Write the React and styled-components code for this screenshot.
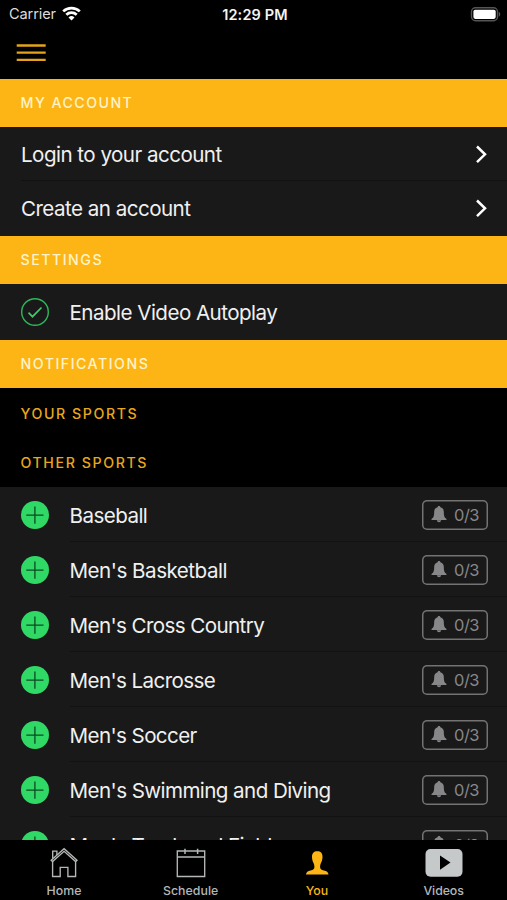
import styled, { createGlobalStyle } from 'styled-components'

const colors = {
  gold: '#fdb515',
  panel: '#191919',
  line: '#121212',
  green: '#30d965',
  grey: '#87878a',
  tab: '#b4b8b9'
}

const GlobalStyle = createGlobalStyle`
  * {
    box-sizing: border-box;
  }

  body {
    margin: 0;
    background: #000;
    font-family: Inter, 'Liberation Sans', sans-serif;
    -webkit-font-smoothing: antialiased;
  }
`

const StyledScreen = styled.div`
  width: 507px;
  height: 900px;
  display: flex;
  flex-direction: column;
  overflow: hidden;
  background: #000;
`

const StyledStatusBar = styled.div`
  flex: none;
  height: 27px;
  display: grid;
  grid-template-columns: 1fr auto 1fr;
  align-items: center;
  padding: 0 6px 0 9px;
  color: #dcdcdc;
  font-size: 14.6px;
  line-height: 27px;
`

const StyledCarrier = styled.div`
  display: flex;
  align-items: center;
  gap: 6px;
  padding-top: 1px;
  letter-spacing: -0.12px;

  svg {
    margin-top: -2px;
  }
`

const StyledTime = styled.div`
  font-weight: 600;
  font-size: 14.5px;
  letter-spacing: 0.15px;
  color: #f4f4f4;
`

const StyledBattery = styled.svg`
  justify-self: end;
`

const StyledHeader = styled.div`
  flex: none;
  height: 52px;
  padding: 16px 0 0 16px;
`

const StyledContent = styled.div`
  flex: 1;
  min-height: 0;
  overflow: hidden;
`

const StyledSection = styled.div`
  height: ${props => props.$height}px;
  display: flex;
  align-items: center;
  padding-left: 20.5px;
  background: ${props => (props.$plain ? '#000' : colors.gold)};
  color: ${props => (props.$plain ? '#e8a71c' : '#fff3c9')};
  font-size: 14.2px;
  font-weight: 500;
  letter-spacing: ${props => props.$spacing}px;
`

const StyledRow = styled.div`
  height: ${props => props.$height}px;
  display: flex;
  align-items: center;
  padding: 0 19px 0 21px;
  background: ${colors.panel};
  background-image: linear-gradient(${colors.line}, ${colors.line});
  background-repeat: no-repeat;
  background-size: 100% ${props => (props.$last ? 0 : 1)}px;
  background-position: ${props => props.$inset}px 100%;
`

const StyledLabel = styled.div`
  flex: 1;
  padding-top: 2px;
  white-space: nowrap;
  color: #f0f0f0;
  font-size: 20.6px;
  line-height: 28px;
  letter-spacing: ${props => props.$spacing}px;
`

const StyledRowIcon = styled.svg`
  flex: none;
  width: 28px;
  height: 28px;
  margin-right: 20.5px;
`

const StyledCounter = styled.div`
  width: 66px;
  height: 30px;
  display: flex;
  align-items: center;
  justify-content: center;
  gap: 7px;
  border-radius: 5px;
  box-shadow: inset 0 0 0 1.5px #737373;
  color: ${colors.grey};
  font-size: 16.4px;
  letter-spacing: -0.5px;
`

const StyledTabBar = styled.div`
  flex: none;
  height: 60px;
  display: grid;
  grid-template-columns: repeat(4, 1fr);
  background: #000;
`

const StyledTab = styled.div`
  display: flex;
  flex-direction: column;
  align-items: center;
  padding-left: ${props => props.$shift || 0}px;
  color: ${props => (props.$active ? colors.gold : colors.tab)};
  font-size: 12.3px;
  font-weight: 550;
  line-height: 16px;
  letter-spacing: ${props => props.$spacing}px;

  svg {
    height: 34px;
    margin: 6px 0 3px;
  }
`

function WifiIcon () {
  return (
    <svg width="19" height="15" viewBox="0 0 19 15" fill="none" stroke="#fff" strokeWidth="2.7">
      <path d="M1.2 5.4a12 12 0 0 1 16.6 0" />
      <path d="M4.3 8.7a7.5 7.5 0 0 1 10.4 0" />
      <path d="M9.5 14.4 6.5 11.5a4.3 4.3 0 0 1 6 0Z" fill="#fff" stroke="none" />
    </svg>
  )
}

function BatteryIcon () {
  return (
    <StyledBattery width="31" height="15" viewBox="0 0 31 15">
      <rect x="1.5" y=".8" width="26" height="13" rx="4" fill="#000" stroke="#555" strokeWidth="1.4" />
      <rect x="3.4" y="2.7" width="22.3" height="9.2" rx="1.8" fill="#fff" />
      <path d="M28.8 5c1.9.5 1.9 4.2 0 4.7z" fill="#555" />
    </StyledBattery>
  )
}

function MenuIcon () {
  return (
    <svg width="30" height="20" viewBox="0 0 30 20" stroke="#e5a31a" strokeWidth="2.3">
      <path d="M.7 2.5h29M.7 9.7h29M.7 16.9h29" />
    </svg>
  )
}

function Chevron () {
  return (
    <svg width="13" height="18" viewBox="0 0 13 18" fill="none" stroke="#fff" strokeWidth="2.5">
      <path d="m2 1.5 8 7.8-8 7.8" />
    </svg>
  )
}

function CheckIcon () {
  return (
    <StyledRowIcon viewBox="0 0 28 28" fill="none" stroke="#2fb85a">
      <circle cx="14" cy="14" r="13.3" strokeWidth="1.4" />
      <path d="m7.5 14.7 4 4 9-9.2" strokeWidth="1.7" stroke="#36cf68" />
    </StyledRowIcon>
  )
}

function PlusIcon () {
  return (
    <StyledRowIcon viewBox="0 0 28 28">
      <circle cx="14" cy="14" r="14" fill={colors.green} />
      <path d="M5.3 14.2h17.2M13.9 5.5v17.2" stroke="#0d4a20" strokeWidth="1.3" />
    </StyledRowIcon>
  )
}

function BellIcon () {
  return (
    <svg width="16" height="17" viewBox="0 0 16 17" fill={colors.grey}>
      <path d="M8 0c.8 0 1.3.5 1.4 1.2 2.3.6 3.4 2.3 3.4 4.6 0 3.8.4 5.9 2.5 7 .4.2.4 1.1-.2 1.1H.9c-.6 0-.6-.9-.2-1.1 2.1-1.1 2.5-3.2 2.5-7 0-2.3 1.1-4 3.4-4.6C6.7.5 7.2 0 8 0z" />
      <path d="M5.8 14.3h4.4c-.2 1.3-1.1 2-2.2 2s-2-.7-2.200-2z" />
    </svg>
  )
}

function HomeIcon () {
  return (
    <svg width="30" viewBox="0 0 30 34" fill="none" stroke="currentColor" strokeWidth="1.35">
      <path d="m2.2 14.2 12.9-11.5 12.9 11.5-1.4 1.3L15.1 5.3 3.6 15.5z" />
      <path d="M3.6 15v15.5h7.6v-9.2h7.7v9.2h7.7V15" />
      <path d="M3.7 12.8V5.1h4.2v3.9" />
    </svg>
  )
}

function ScheduleIcon () {
  return (
    <svg width="30" viewBox="0 0 30 34" fill="none" stroke="currentColor" strokeWidth="1.35">
      <path d="M1.3 5h27.400v25.5H1.3zM1.3 11h27.4" />
      <path d="M9 2.7v5.4M21.6 2.7v5.4" strokeWidth="1.5" />
    </svg>
  )
}

function PersonIcon () {
  return (
    <svg width="30" viewBox="0 0 30 34" fill="currentColor">
      <path d="M15.300 5.200c3.500 0 5.300 2 5.200 5.500 0 2.600-.7 4.700-1.500 6.200-.7 1.300-.9 2.400-.9 4.200 0 2 1.100 2.800 3.800 3.500 2.800.7 4.400 1.600 4.600 4H4c.2-2.400 1.800-3.300 4.600-4 2.700-.7 3.800-1.500 3.800-3.500 0-1.800-.2-2.900-.9-4.200-.8-1.500-1.500-3.600-1.500-6.200 0-3.500 1.800-5.500 5.300-5.500z" />
    </svg>
  )
}

function VideoIcon () {
  return (
    <svg width="38" viewBox="0 0 38 34">
      <rect x=".5" y="3" width="37" height="27.7" rx="5" fill="#c5c9ca" />
      <path d="m15 9.6 10.5 7L15 23.8z" fill="#000" />
    </svg>
  )
}

const sports = [
  { name: 'Baseball', spacing: -0.56 },
  { name: "Men's Basketball", spacing: -0.5 },
  { name: "Men's Cross Country", spacing: -0.6 },
  { name: "Men's Lacrosse", spacing: -0.6 },
  { name: "Men's Soccer", spacing: -0.6 },
  { name: "Men's Swimming and Diving", spacing: -0.58 },
  { name: "Men's Track and Field", spacing: -0.6 }
]

const tabs = [
  { name: 'Home', Icon: HomeIcon, spacing: 0.1, shift: 1.5 },
  { name: 'Schedule', Icon: ScheduleIcon, spacing: 0.05, shift: 1 },
  { name: 'You', Icon: PersonIcon, spacing: 0, active: true },
  { name: 'Videos', Icon: VideoIcon, spacing: -0.05 }
]

function App () {
  return (
    <StyledScreen>
      <GlobalStyle />

      <StyledStatusBar>
        <StyledCarrier>Carrier <WifiIcon /></StyledCarrier>
        <StyledTime>12:29 PM</StyledTime>
        <BatteryIcon />
      </StyledStatusBar>

      <StyledHeader>
        <MenuIcon />
      </StyledHeader>

      <StyledContent>
        <StyledSection $height={47.5} $spacing={1.45}>MY ACCOUNT</StyledSection>
        <StyledRow $height={54.5} $inset={21}>
          <StyledLabel $spacing={-0.54}>Login to your account</StyledLabel>
          <Chevron />
        </StyledRow>
        <StyledRow $height={54.5} $inset={21} $last>
          <StyledLabel $spacing={-0.54}>Create an account</StyledLabel>
          <Chevron />
        </StyledRow>

        <StyledSection $height={48.5} $spacing={1.5}>SETTINGS</StyledSection>
        <StyledRow $height={55.5} $inset={70} $last>
          <CheckIcon />
          <StyledLabel $spacing={-0.54}>Enable Video Autoplay</StyledLabel>
        </StyledRow>

        <StyledSection $height={48.5} $spacing={1.5}>NOTIFICATIONS</StyledSection>
        <StyledSection $plain $height={50} $spacing={1.58}>YOUR SPORTS</StyledSection>
        <StyledSection $plain $height={49} $spacing={1.58}>OTHER SPORTS</StyledSection>

        {sports.map(({ name, spacing }) => (
          <StyledRow key={name} $height={55} $inset={70}>
            <PlusIcon />
            <StyledLabel $spacing={spacing}>{name}</StyledLabel>
            <StyledCounter><BellIcon />0/3</StyledCounter>
          </StyledRow>
        ))}
      </StyledContent>

      <StyledTabBar>
        {tabs.map(({ name, Icon, spacing, shift, active }) => (
          <StyledTab key={name} $active={active} $spacing={spacing} $shift={shift}>
            <Icon />
            {name}
          </StyledTab>
        ))}
      </StyledTabBar>
    </StyledScreen>
  )
}

export default App
